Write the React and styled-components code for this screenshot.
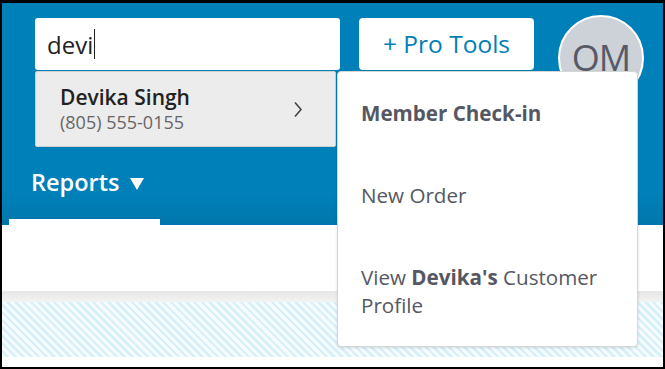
import React from "react";
import styled, { createGlobalStyle } from "styled-components";

const Global = createGlobalStyle`
  html, body { margin: 0; padding: 0; background: #fff; }
  body { font-family: "Open Sans", "Noto Sans", sans-serif; }
  * { box-sizing: border-box; }
`;

const Frame = styled.div`
  position: relative;
  width: 665px;
  height: 369px;
  border-style: solid;
  border-color: #000;
  border-width: 3px 2px 2px 2px;
  display: flex;
  flex-direction: column;
  overflow: hidden;
`;

const Header = styled.header`
  height: 222px;
  background: linear-gradient(to bottom, #0080b9 0px, #0080b9 190px, #0077ac 222px);
  display: flex;
  flex-direction: column;
`;

const TopRow = styled.div`
  display: flex;
  align-items: flex-start;
  padding: 15px 0 0 33px;
`;

const SearchBox = styled.div`
  position: relative;
  width: 305px;
  height: 52px;
  background: #fff;
  border-radius: 3px;
  display: flex;
  align-items: center;
  padding-left: 12px;
  font-size: 24px;
  color: #222;
`;

const Caret = styled.span`
  display: inline-block;
  width: 1px;
  height: 30px;
  background: #222;
  margin-left: 1px;
`;

const ProButton = styled.button`
  margin-left: 19px;
  width: 175px;
  height: 52px;
  border: none;
  border-radius: 4px;
  background: #fff;
  color: #0080b9;
  font-family: "Open Sans", sans-serif;
  font-size: 24.5px;
  padding: 0;
  padding-bottom: 2px;
`;

const Avatar = styled.div`
  margin-left: 24px;
  margin-top: -3px;
  width: 86px;
  height: 86px;
  border-radius: 50%;
  border: 2px solid #fff;
  background: #cdd1d8;
  color: #555a66;
  font-size: 36px;
  letter-spacing: -1px;
  display: flex;
  align-items: center;
  justify-content: center;
  padding-bottom: 2px;
`;

const NavRow = styled.nav`
  margin-top: auto;
  display: flex;
  padding-left: 7px;
`;

const NavTab = styled.div`
  width: 151px;
  height: 58px;
  display: flex;
  flex-direction: column;
  justify-content: space-between;
`;

const NavLabel = styled.div`
  color: #fff;
  font-size: 23.5px;
  font-weight: 600;
  padding-left: 22px;
  line-height: 30px;
  display: flex;
  align-items: center;
  gap: 11px;
`;

const Triangle = styled.span`
  width: 0;
  height: 0;
  border-left: 7px solid transparent;
  border-right: 7px solid transparent;
  border-top: 12px solid #fff;
  margin-top: 3px;
`;

const ActiveBar = styled.div`
  height: 6px;
  background: #fff;
`;

const Content = styled.main`
  flex: 1;
  display: flex;
  flex-direction: column;
`;

const WhiteArea = styled.div`
  height: 66px;
  background: #fff;
`;

const Shade = styled.div`
  height: 11px;
  background: linear-gradient(to bottom, #e6e6e6, #f3f3f3);
`;

const Hatch = styled.div`
  height: 55px;
  background-color: #f6fbfd;
  background-image: repeating-linear-gradient(
    45deg,
    #f6fbfd 0px,
    #f6fbfd 3px,
    #d8f0f9 3px,
    #d8f0f9 5.5px
  );
`;

const Suggestion = styled.div`
  position: absolute;
  left: 33px;
  top: 68px;
  width: 301px;
  height: 76px;
  background: #ececec;
  border: 1px solid #cfcfcf;
  border-radius: 2px;
  display: flex;
  align-items: center;
  padding-left: 24px;
  padding-right: 32px;
`;

const SuggestText = styled.div`
  flex: 1;
  display: flex;
  flex-direction: column;
`;

const SuggestName = styled.div`
  font-size: 21px;
  font-weight: 600;
  color: #222;
  line-height: 26px;
`;

const SuggestPhone = styled.div`
  font-size: 18px;
  color: #666;
  line-height: 24px;
`;

const Menu = styled.div`
  position: absolute;
  left: 335px;
  top: 68px;
  width: 301px;
  background: #fff;
  border: 1px solid #d6d6d6;
  border-radius: 4px;
  box-shadow: 0 1px 3px rgba(0, 0, 0, 0.12);
  display: flex;
  flex-direction: column;
`;

const MenuItem = styled.div`
  padding: 27px 20px 27px 23px;
  font-size: 20.6px;
  line-height: 28px;
  color: #555862;
  font-weight: ${(p) => (p.$bold ? 700 : 400)};
`;

const Strong = styled.strong`
  font-weight: 700;
`;

export default function App() {
  return (
    <>
      <Global />
      <Frame>
        <Header>
          <TopRow>
            <SearchBox>
              devi<Caret />
            </SearchBox>
            <ProButton>+ Pro Tools</ProButton>
            <Avatar>OM</Avatar>
          </TopRow>
          <NavRow>
            <NavTab>
              <NavLabel>
                Reports <Triangle />
              </NavLabel>
              <ActiveBar />
            </NavTab>
          </NavRow>
        </Header>
        <Content>
          <WhiteArea />
          <Shade />
          <Hatch />
        </Content>
        <Suggestion>
          <SuggestText>
            <SuggestName>Devika Singh</SuggestName>
            <SuggestPhone>(805) 555-0155</SuggestPhone>
          </SuggestText>
          <svg width="10" height="17" viewBox="0 0 10 17">
            <path d="M2 1.5 L8 8.5 L2 15.5" fill="none" stroke="#444" strokeWidth="1.6" />
          </svg>
        </Suggestion>
        <Menu>
          <MenuItem $bold>Member Check-in</MenuItem>
          <MenuItem>New Order</MenuItem>
          <MenuItem>
            View <Strong>Devika's</Strong> Customer Profile
          </MenuItem>
        </Menu>
      </Frame>
    </>
  );
}
